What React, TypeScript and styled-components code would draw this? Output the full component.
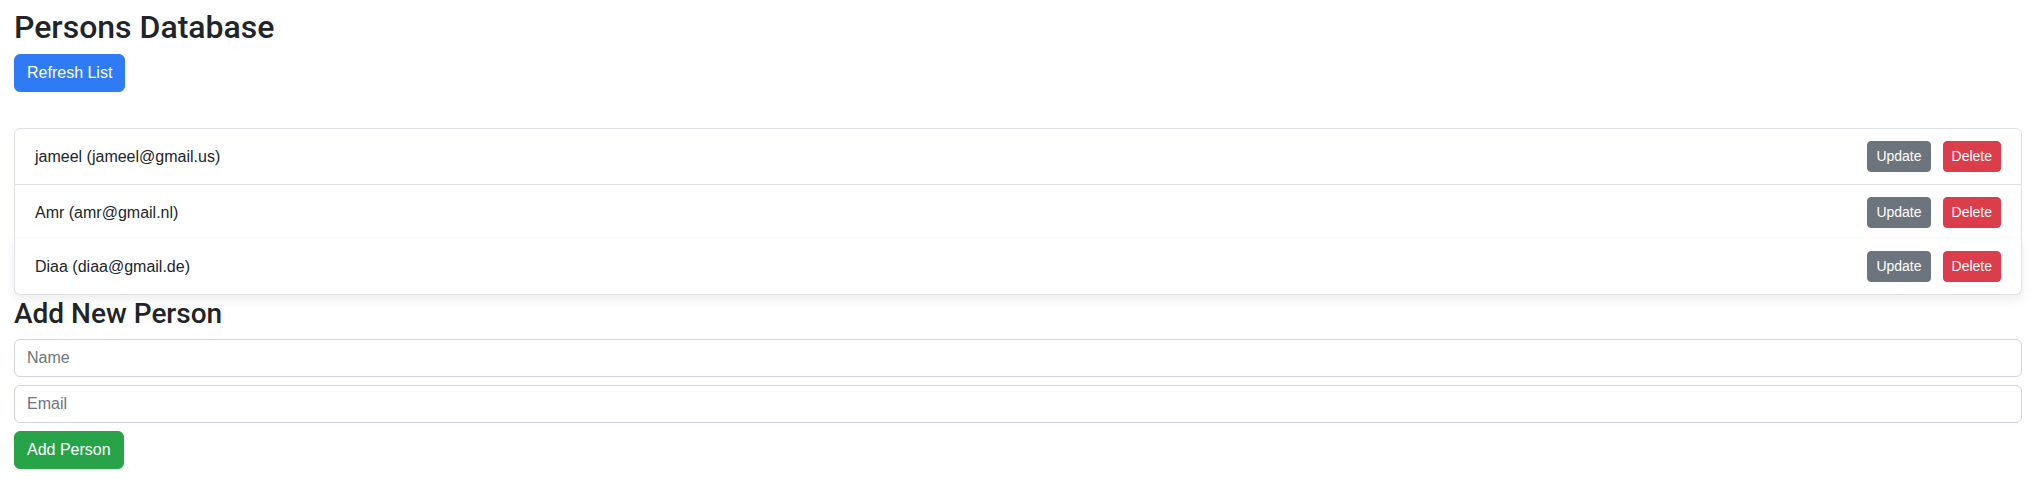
import React from "react";
import styled, { createGlobalStyle, css } from "styled-components";

const GlobalStyle = createGlobalStyle`
  html, body {
    margin: 0;
    padding: 0;
    background: #ffffff;
  }
  body {
    font-family: "Liberation Sans", Arial, sans-serif;
    font-size: 16px;
    line-height: 1.5;
    color: #212529;
  }
  * { box-sizing: border-box; }
`;

const Page = styled.div`
  padding: 8px 20px 0 14px;
`;

const Title = styled.h2`
  margin: 0 0 8px;
  font-family: Roboto, "Liberation Sans", Arial, sans-serif;
  font-size: 32px;
  font-weight: 500;
  line-height: 1.2;
  color: #212529;
`;

const SubTitle = styled.h3`
  margin: 0 0 8px;
  font-family: Roboto, "Liberation Sans", Arial, sans-serif;
  font-size: 28px;
  font-weight: 500;
  line-height: 1.2;
  color: #212529;
`;

type Variant = "primary" | "secondary" | "danger" | "success";

const colors: Record<Variant, string> = {
  primary: "#2f7bf6",
  secondary: "#6c757d",
  danger: "#dc3d4a",
  success: "#27a447",
};

const Button = styled.button<{ $variant: Variant; $small?: boolean }>`
  display: inline-block;
  font-family: "Liberation Sans", Arial, sans-serif;
  color: #ffffff;
  background: ${(p) => colors[p.$variant]};
  border: 1px solid ${(p) => colors[p.$variant]};
  cursor: pointer;
  line-height: 1.5;
  ${(p) =>
    p.$small
      ? css`
          padding: 4px 8px;
          font-size: 14px;
          border-radius: 4px;
        `
      : css`
          padding: 6px 12px;
          font-size: 16px;
          border-radius: 6px;
        `}
`;

const List = styled.ul`
  list-style: none;
  margin: 36px 0 0;
  padding: 0;
  display: flex;
  flex-direction: column;
`;

const Item = styled.li<{ $raised?: boolean }>`
  display: flex;
  align-items: center;
  justify-content: space-between;
  padding: 12px 20px;
  background: #ffffff;
  border: 1px solid #dee2e6;
  border-top-width: 0;
  &:first-child {
    border-top-width: 1px;
    border-top-left-radius: 6px;
    border-top-right-radius: 6px;
  }
  &:last-child {
    border-bottom-left-radius: 6px;
    border-bottom-right-radius: 6px;
  }
  ${(p) =>
    p.$raised &&
    css`
      position: relative;
      transform: translateY(-2px);
      border-top-color: transparent;
      box-shadow: 0 4px 12px rgba(0, 0, 0, 0.08);
    `}
`;

const Actions = styled.div`
  display: flex;
  gap: 12px;
`;

const Form = styled.div`
  display: flex;
  flex-direction: column;
  align-items: flex-start;
  gap: 8px;
`;

const Input = styled.input`
  width: 100%;
  display: block;
  padding: 6px 12px;
  font-family: "Liberation Sans", Arial, sans-serif;
  font-size: 16px;
  line-height: 1.5;
  color: #212529;
  background: #ffffff;
  border: 1px solid #ced4da;
  border-radius: 6px;
  outline: none;
  &::placeholder {
    color: #6c757d;
  }
`;

const persons = [
  { name: "jameel", email: "jameel@gmail.us" },
  { name: "Amr", email: "amr@gmail.nl" },
  { name: "Diaa", email: "diaa@gmail.de" },
];

export default function App() {
  return (
    <>
      <GlobalStyle />
      <Page>
        <Title>Persons Database</Title>
        <Button $variant="primary">Refresh List</Button>
        <List>
          {persons.map((p, i) => (
            <Item key={p.email} $raised={i === persons.length - 1}>
              <span>
                {p.name} ({p.email})
              </span>
              <Actions>
                <Button $variant="secondary" $small>
                  Update
                </Button>
                <Button $variant="danger" $small>
                  Delete
                </Button>
              </Actions>
            </Item>
          ))}
        </List>
        <SubTitle>Add New Person</SubTitle>
        <Form>
          <Input placeholder="Name" />
          <Input placeholder="Email" />
          <Button $variant="success">Add Person</Button>
        </Form>
      </Page>
    </>
  );
}
